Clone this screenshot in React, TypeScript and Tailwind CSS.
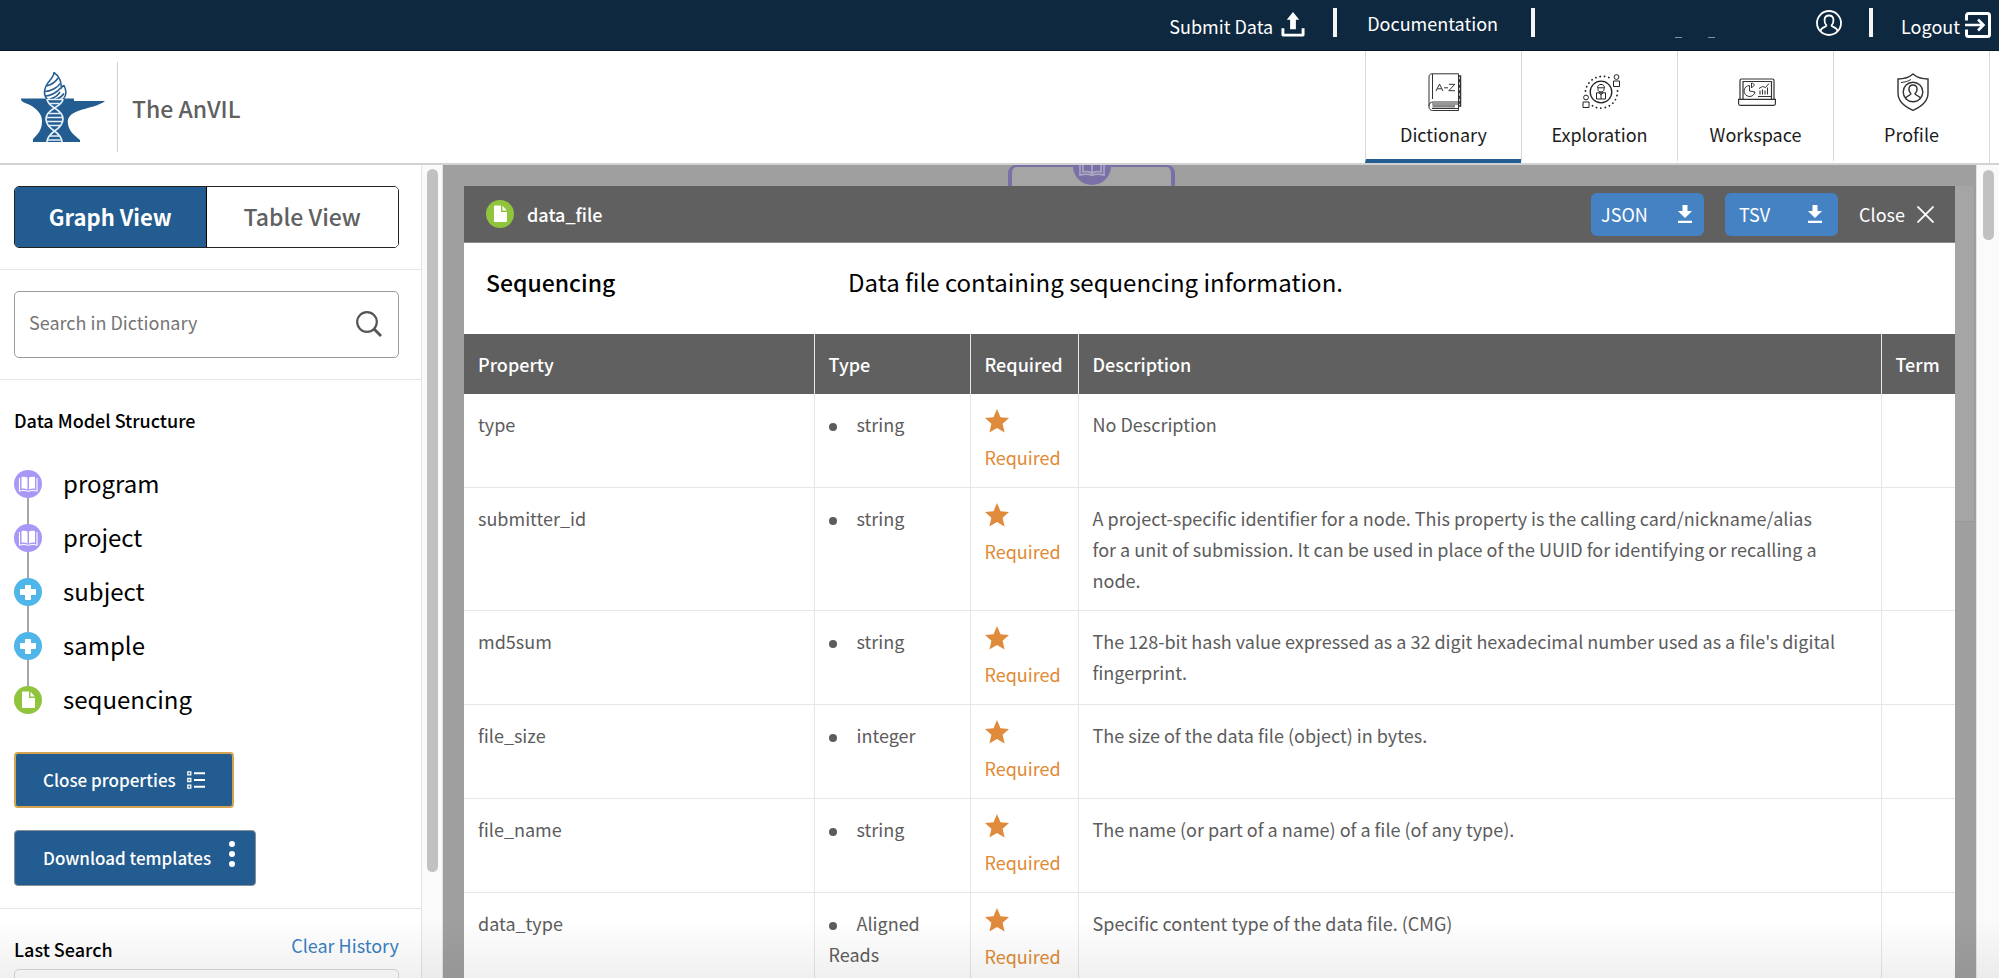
import React from "react";

type IconProps = { className?: string };

const FONT = "font-['Noto_Sans_CJK_SC','Noto_Sans',sans-serif]";

function AnvilLogo() {
  return (
    <svg viewBox="0 0 84 70" className="h-[70px] w-[84px]" role="img" aria-label="AnVIL logo">
      <path d="M0 26.500h53v2.500h31C80 33 66 36 57 39c-8 3-11 7-10 13 1 7 5 10 12 16v2H12v-3c5-5 9-9 9-18 0-7-5-12-12-16-4-2-9-3-9-6z" fill="#235c90" />
      <path d="M33 .5c0 7-10 10-9.500 20 0 3 1 5 3 7h15.500c3-3 4-8 1-14-2 .5-2.500 2-3 3 1-6-2-13-7-16z" fill="#fff" stroke="#235c90" strokeWidth="1.500" strokeLinejoin="round" />
      <g fill="none" stroke="#235c90" strokeWidth="1.500">
        <path d="M25.500 14c4-1 9-4 11.500-8M24 19.500c5 0 13-4 15-8M24.500 24c5 0 12-4 15-8M29 27c5-1 8-4 10-7M35 27.500c3-1 6-3 8-6" />
      </g>
      <g fill="none" stroke="#e4f0fa" strokeWidth="1.700">
        <path d="M26 27c0 3 3 6 7.500 9 5 3 8.500 6 8.500 11s-4 9-8.500 12c-4 3-7.500 6-7.500 11" />
        <path d="M42 27c0 3-3.500 6-8.500 9-5 3-8.500 6-8.500 11s4 9 8.500 12c4 3 7.500 6 7.500 11" />
        <path d="M26.500 27.500h15M28.500 31.500h10M28 41.500h11M25.500 45.500h16M25.500 49.500h16M28 53.500h11M29 64h9M26.500 68h14" strokeWidth="1.400" />
      </g>
    </svg>
  );
}

function UploadIcon({ className }: IconProps) {
  return (
    <svg viewBox="0 0 24 26" className={className} aria-hidden="true">
      <path d="M12 0l6.500 8H15v10H9V8H5.500z" fill="#fff" />
      <path d="M1.500 17v7h21v-7" fill="none" stroke="#fff" strokeWidth="3" strokeLinejoin="round" />
    </svg>
  );
}

function LogoutIcon({ className }: IconProps) {
  return (
    <svg viewBox="0 0 26 26" className={className} fill="none" stroke="#fff" strokeWidth="3" aria-hidden="true">
      <path d="M1.500 8.500V3.500a2 2 0 0 1 2-2h19a2 2 0 0 1 2 2v19a2 2 0 0 1-2 2h-19a2 2 0 0 1-2-2v-5" />
      <path d="M0 13h18M13 7.500l5.500 5.500-5.500 5.500" strokeWidth="2.600" />
    </svg>
  );
}

function UserCircleIcon({ className }: IconProps) {
  return (
    <svg viewBox="0 0 26 26" className={className} fill="none" stroke="#fff" strokeWidth="1.800" aria-hidden="true">
      <circle cx="13" cy="13" r="12" />
      <path d="M10.500 15.500C8 13 7 5.500 13 5.500s5 7.500 2.500 10c-.5 1.500 5.500 1.500 6 5.500M10.500 15.500c.5 1.500-5.500 1.500-6 5.500" />
    </svg>
  );
}

function DictionaryIcon() {
  return (
    <svg viewBox="0 0 34 38" className="h-[38px] w-[34px]" fill="none" stroke="#333" strokeWidth="1" aria-hidden="true">
      <path d="M30.500 .8H4C2 .8 1 2 1 4v30c0 2 1.500 3.500 3.500 3.500h26V.8z" />
      <path d="M4.500 1v25M1 33c0-2.500 1.500-4 4-4h25.500" />
      <path d="M4 31h26.500M4 35.500h26.500" />
      <path d="M4.500 33.300h22.500" stroke="#888" strokeWidth="2.600" />
      <path d="M31 3h1.500v4H31M31 8.500h1.500v4H31M31 14h1.500v4H31M31 19.500h1.500v4H31M31 25h1.500v4H31M31 30h1.500v3H31" strokeWidth="1.500" />
      <path d="M8 18l3.500-7 3.500 7M9.300 15.800h4.500M16 14.800h4M20.800 11.300h6l-6 6.400h6.200" />
    </svg>
  );
}

function ExplorationIcon() {
  return (
    <svg viewBox="0 0 38 36" className="h-[36px] w-[38px]" fill="none" stroke="#222" strokeWidth="1" aria-hidden="true">
      <path d="M3.500 17C5 6 17-1 28 4M35.500 17c0 10-7 16.500-15.500 17-4 .2-7-.5-10-2.500" strokeWidth="1.800" strokeLinecap="round" strokeDasharray="0.100 4.300" />
      <circle cx="19" cy="18" r="10.800" strokeWidth="1.300" />
      <path d="M16 14.200v1.500c0 3 6 3 6 0v-1.500M15.500 13.800c0-4.500 7-4.500 7 0z" />
      <path d="M14.500 25v-6.200h9V25zM19 18.800V25M17 18.800l2 2 2-2" />
      <circle cx="34.500" cy="3" r="2.400" /><path d="M31.500 12.500V7h6v5.500z" />
      <circle cx="4" cy="23.500" r="2.400" /><path d="M1 33.500V28h6v5.500z" />
    </svg>
  );
}

function WorkspaceIcon() {
  return (
    <svg viewBox="0 0 38 28" className="h-[28px] w-[38px]" fill="none" stroke="#333" strokeWidth="1.200" aria-hidden="true">
      <path d="M2 21V2.500C2 1.500 2.500 1 3.500 1h31c1 0 1.500.5 1.500 1.500V21" />
      <path d="M5 21V3.500h28.500V21" />
      <path d="M.6 21.300h36.800v4.500c0 1-.5 1.500-1.500 1.500H2.100c-1 0-1.500-.5-1.500-1.500z" />
      <path d="M11.500 7.500a5.500 5.500 0 1 0 5.500 6.500l-5.500-1zM13.500 10V5c1.500.3 2.500 1 3 2z" strokeWidth="1" />
      <path d="M22 16.500v-4M24.500 16.500v-5M27 16.500v-4M29.500 16.500v-7" strokeWidth="1.100" />
      <path d="M20 18.500h13M21 10.500l3.500-2 3 1L31 5.500" strokeWidth="1" />
    </svg>
  );
}

function ProfileIcon() {
  return (
    <svg viewBox="0 0 32 38" className="h-[38px] w-[32px]" fill="none" stroke="#333" strokeWidth="1.400" aria-hidden="true">
      <path d="M16 1c-4 3.500-9 5-15 5v14c0 8 6 13.500 15 17.300C25 33.500 31 28 31 20V6c-6 0-11-1.500-15-5z" />
      <path d="M4 9.500c4-.3 7-1.200 10-3" strokeWidth="1" />
      <circle cx="16" cy="19" r="9.800" />
      <path d="M14 20.500c-3-2.500-3-8.500 2-8.500s5 6 2 8.500c-.3 2 4.500 1.500 5.500 5M14 20.500c.3 2-4.500 1.500-5.500 5" />
    </svg>
  );
}

type Kind = "book" | "plus" | "file";

function NodeIcon({ kind, className }: { kind: Kind; className?: string }) {
  const fill = kind === "book" ? "#a897f5" : kind === "plus" ? "#50b5e8" : "#90c43c";
  return (
    <svg viewBox="0 0 28 28" className={className} aria-hidden="true">
      <circle cx="14" cy="14" r="14" fill={fill} />
      {kind === "book" && (
        <>
          <path d="M7.500 7c2.500-.6 4.500-.4 6 .5V19.500c-1.700-1-4-1.200-6-.8zM21 7c-2.500-.6-4.500-.4-6 .5V19.500c1.700-1 4-1.200 6-.8z" fill="#fff" />
          <path d="M5.500 8v13c3.500-.8 6-.6 8.800.3 2.700-.9 5.200-1.100 8.700-.3V8" fill="none" stroke="#fff" strokeWidth="1.100" />
        </>
      )}
      {kind === "plus" && <path d="M11.500 7.500h5v4h5v5h-5v5h-5v-5h-5v-5h5z" fill="#fff" stroke="#fff" strokeLinejoin="round" />}
      {kind === "file" && <path d="M9 5.500h6v6.500h6v9c0 .6-.4 1-1 1H9c-.6 0-1-.4-1-1V6.500c0-.6.4-1 1-1zM16.500 5.800l4.300 4.700h-4.300z" fill="#fff" />}
    </svg>
  );
}

function DownloadIcon() {
  return (
    <svg viewBox="0 0 14 18" className="h-[18px] w-[14px]" fill="#fff" aria-hidden="true">
      <path d="M4.500 0h5v6H14l-7 7-7-7h4.500zM0 15.700h14V18H0z" />
    </svg>
  );
}

const tabs = [
  { label: "Dictionary", icon: <DictionaryIcon />, active: true },
  { label: "Exploration", icon: <ExplorationIcon /> },
  { label: "Workspace", icon: <WorkspaceIcon /> },
  { label: "Profile", icon: <ProfileIcon /> },
];

const structure: { name: string; kind: Kind }[] = [
  { name: "program", kind: "book" },
  { name: "project", kind: "book" },
  { name: "subject", kind: "plus" },
  { name: "sample", kind: "plus" },
  { name: "sequencing", kind: "file" },
];

const rows = [
  { property: "type", type: "string", description: "No Description" },
  {
    property: "submitter_id",
    type: "string",
    description:
      "A project-specific identifier for a node. This property is the calling card/nickname/alias\nfor a unit of submission. It can be used in place of the UUID for identifying or recalling a node.",
  },
  {
    property: "md5sum",
    type: "string",
    description: "The 128-bit hash value expressed as a 32 digit hexadecimal number used as a file's digital fingerprint.",
  },
  { property: "file_size", type: "integer", description: "The size of the data file (object) in bytes." },
  { property: "file_name", type: "string", description: "The name (or part of a name) of a file (of any type)." },
  { property: "data_type", type: "Aligned Reads", description: "Specific content type of the data file. (CMG)" },
];

function TopBar() {
  const bar = <span className="h-[29px] w-1 bg-[#f4f4f4]" />;
  return (
    <div className="flex h-[51px] shrink-0 items-start justify-end border-b border-[#061a2b] bg-[#0d283f] pt-2 pr-2 text-lg leading-[29px] text-white">
      <a href="#submit" className="mr-7 flex items-center gap-2">
        <span className="pt-1">Submit Data</span>
        <UploadIcon className="h-[25px] w-6" />
      </a>
      {bar}
      <a href="#documentation" className="mr-[33px] ml-[30px] pt-px">Documentation</a>
      {bar}
      <a href="#account" aria-label="Account" className="ml-[140px] flex h-[30px] items-end gap-[26px]">
        <span className="h-px w-[7px] bg-[#8191a0]" />
        <span className="h-px w-[7px] bg-[#8191a0]" />
        <UserCircleIcon className="ml-[75px] h-[26px] w-[26px] self-center" />
      </a>
      <span className="w-[27px]" />
      {bar}
      <a href="#logout" className="ml-7 flex items-center gap-[5px]">
        <span className="pt-1">Logout</span>
        <LogoutIcon className="h-[26px] w-[26px]" />
      </a>
    </div>
  );
}

function Header() {
  return (
    <header className="flex h-[114px] shrink-0 justify-between border-b-2 border-[#d2d2d2] bg-white pr-[9px]">
      <div className="flex items-center pl-[21px]">
        <AnvilLogo />
        <span className="mr-[14px] ml-3 h-[90px] w-px bg-[#d0d0d0]" />
        <span className="pt-[2px] text-[23px] font-medium text-[#606060]">The AnVIL</span>
      </div>
      <nav className="flex border-r border-[#d8d8d8]">
        {tabs.map((t) => (
          <a
            key={t.label}
            href={"#" + t.label.toLowerCase()}
            className={
              "flex w-[156px] flex-col items-center border-b-4 border-l border-l-[#d8d8d8] pt-[21px] text-lg text-[#1c1c1c] " +
              (t.active ? "border-b-[#235c90]" : "border-b-transparent")
            }
          >
            <span className="flex h-[40px] items-center pl-[2px]">{t.icon}</span>
            <span className="pt-[7px] leading-[30px]">{t.label}</span>
          </a>
        ))}
      </nav>
    </header>
  );
}

function Sidebar() {
  return (
    <aside className="flex w-[443px] shrink-0 overflow-hidden">
      <div className="min-w-0 flex-1">
        <div className="border-b border-[#e6e6e6] px-[14px] pt-[21px] pb-[21px]">
          <div className="grid h-[62px] w-[385px] grid-cols-2 overflow-hidden rounded-[5px] border border-[#222] leading-[58px]">
            <button type="button" className="border-r border-black bg-[#235c90] pb-[2px] text-[22px] font-bold text-white">Graph View</button>
            <button type="button" className="bg-white pb-[2px] text-[23px] font-medium text-[#606060]">Table View</button>
          </div>
        </div>
        <div className="border-b border-[#e6e6e6] px-[14px] py-[21px]">
          <div className="flex h-[67px] w-[385px] items-center rounded-[5px] border border-[#9a9a9a] pr-4 pl-[14px]">
            <input type="text" aria-label="Search in Dictionary" placeholder="Search in Dictionary" className="h-[60px] min-w-0 flex-1 pb-[6px] text-lg text-[#606060] outline-none placeholder:text-[#757575]" />
            <button type="button" aria-label="Search" className="pb-[2px]">
              <svg viewBox="0 0 26 26" className="h-[26px] w-[26px]" fill="none" stroke="#555" strokeWidth="2.200" aria-hidden="true">
                <circle cx="11" cy="11" r="9.800" />
                <path d="M18 18l7 7" strokeWidth="2.800" />
              </svg>
            </button>
          </div>
        </div>
        <div className="border-b border-[#e6e6e6] px-[14px] pt-[26px] pb-[22px]">
          <h4 className="text-lg leading-[28px] font-medium text-black">Data Model Structure</h4>
          <ul className="mt-9">
            {structure.map((s, i) => (
              <li key={s.name} className="flex items-start text-2xl leading-[26px] text-black">
                <span className="flex w-7 flex-col items-center">
                  <NodeIcon kind={s.kind} className="h-7 w-7" />
                  {i < structure.length - 1 && <span className="h-[26px] w-[2px] bg-[#a6a6a6]" />}
                </span>
                <span className="pl-[21px]">{s.name}</span>
              </li>
            ))}
          </ul>
          <div className="mt-[38px] flex flex-col items-start gap-[22px] text-[17px] font-medium text-white">
            <button type="button" className="flex h-[56px] items-center gap-[11px] rounded-[4px] border-2 border-[#d3a552] bg-[#235c90] pr-[27px] pl-[27px]">
              Close properties
              <svg viewBox="0 0 18 18" className="h-[18px] w-[18px]" fill="none" stroke="#fff" strokeWidth="1.300" aria-hidden="true">
                <path d="M.8.800h3v3h-3zM.8 7.500h3v3h-3zM.8 14.200h3v3h-3z" />
                <path d="M7 2.300h11M7 9h11M7 15.700h11" strokeWidth="1.900" />
              </svg>
            </button>
            <button type="button" className="flex h-[56px] items-center gap-[18px] rounded-[4px] border border-[#8a8f96] bg-[#235c90] pr-[20px] pl-7">
              Download templates
              <svg viewBox="0 0 6 26" className="mb-2 h-[26px] w-[6px]" fill="#fff" aria-hidden="true">
                <circle cx="3" cy="3" r="3" /><circle cx="3" cy="13" r="3" /><circle cx="3" cy="23" r="3" />
              </svg>
            </button>
          </div>
        </div>
        <div className="px-[14px] pt-[22px]">
          <div className="flex w-[385px] justify-between text-lg leading-[28px]">
            <h4 className="pt-1 font-medium text-black">Last Search</h4>
            <button type="button" className="pb-1 text-[#3a7fc0]">Clear History</button>
          </div>
          <div className="mt-[6px] h-[60px] w-[385px] rounded-[5px] border border-[#d8d8d8]" />
        </div>
      </div>
      <div className="flex w-[22px] justify-center border-x border-[#e4e4e4] bg-[#fafafa] pt-[4px]">
        <div className="h-[703px] w-[11px] rounded-full bg-[#c1c1c1]" />
      </div>
    </aside>
  );
}

function PropertyPanel() {
  const dl = "flex h-[43px] w-[113px] items-center justify-between rounded-[6px] bg-[#4582c3]";
  const td = "border-b border-[#e6e6e6] px-[14px] pt-[15px] pb-[14px]";
  return (
    <section className="relative min-w-0 flex-1 bg-white">
      <div className="flex h-[57px] items-center border-b border-[#8c8c8c] bg-[#606060] pr-[21px] pl-[22px] text-lg text-white">
        <NodeIcon kind="file" className="h-7 w-7" />
        <span className="ml-[13px] flex-1 font-medium">data_file</span>
        <button type="button" className={dl + " mr-[21px] pr-3 pl-[10px]"}>JSON<DownloadIcon /></button>
        <button type="button" className={dl + " mr-[21px] pr-4 pl-[14px]"}>TSV<DownloadIcon /></button>
        <button type="button" className="flex items-center gap-3">
          Close
          <svg viewBox="0 0 17 17" className="h-[17px] w-[17px]" stroke="#fff" strokeWidth="1.800" aria-hidden="true">
            <path d="M.5.500l16 16M16.500.500l-16 16" />
          </svg>
        </button>
      </div>
      <div className="flex h-[91px] items-start px-[22px] pt-[23px] leading-8 text-black">
        <h3 className="w-[362px] text-[23px] font-medium">Sequencing</h3>
        <p className="text-2xl leading-8">Data file containing sequencing information.</p>
      </div>
      <table className="w-full table-fixed border-collapse text-left text-lg leading-[31px] text-[#5c5c5c]">
        <colgroup>
          <col className="w-[350px]" />
          <col className="w-[156px]" />
          <col className="w-[108px]" />
          <col />
          <col className="w-[74px]" />
        </colgroup>
        <thead>
          <tr className="h-[60px] bg-[#606060] text-white">
            {["Property", "Type", "Required", "Description", "Term"].map((h) => (
              <th key={h} scope="col" className="border-r border-[#e6e6e6] px-[14px] font-medium last:border-r-0">{h}</th>
            ))}
          </tr>
        </thead>
        <tbody>
          {rows.map((r) => (
            <tr key={r.property} className="align-top">
              <td className={td + " border-r"}>{r.property}</td>
              <td className={td + " border-r"}>
                <span className="mr-5 inline-block h-2 w-2 rounded-full bg-[#5c5c5c] align-middle" />
                {r.type}
              </td>
              <td className={td + " border-r text-[#e08a35]"}>
                <svg viewBox="0 0 24 24" className="mb-[9px] block h-6 w-6" fill="#e08a3c" aria-hidden="true">
                  <path d="M12 0l3.500 8.200 8.500.7-6.400 5.800 2 8.800L12 19l-7.600 4.500 2-8.800L0 8.900l8.500-.7z" />
                </svg>
                Required
              </td>
              <td className={td + " border-r whitespace-pre-line"}>{r.description}</td>
              <td className={td} />
            </tr>
          ))}
        </tbody>
      </table>
    </section>
  );
}

export default function App() {
  return (
    <div className={"relative flex h-screen flex-col overflow-hidden bg-white " + FONT}>
      <TopBar />
      <Header />
      <div className="flex min-h-0 flex-1">
        <Sidebar />
        <main className="relative flex min-w-0 flex-1 overflow-hidden bg-[#9f9f9f] pt-[21px] pr-[21px] pl-[21px]">
          <div className="absolute top-[21px] right-px h-[336px] w-[40px] border-r border-b border-[#999] bg-[#a5a5a5]" />
          <div className="absolute top-0 left-[565px] flex h-[80px] w-[167px] justify-center rounded-t-[8px] border-x-4 border-t-2 border-[#7a70a6] bg-[#a5a5a5]">
            <svg viewBox="0 0 38 38" className="-mt-5 h-[38px] w-[38px] shrink-0" fill="none" aria-hidden="true">
              <circle cx="19" cy="19" r="19" fill="#7a70a6" />
              <path d="M7 8v20c5-1 9-1 12 .5 3-1.500 7-1.500 12-.5V8M10 8v17c4-1 7-.5 9 1.500 2-2 5-2.500 9-1.500V8M19 8v18" stroke="#b0acc4" strokeWidth="1.500" />
            </svg>
          </div>
          <PropertyPanel />
        </main>
        <div className="flex w-[23px] shrink-0 justify-center border-l border-[#e4e4e4] bg-[#fafafa] pt-[5px]">
          <div className="h-[70px] w-[11px] rounded-full bg-[#c1c1c1]" />
        </div>
      </div>
      <div className="pointer-events-none absolute inset-x-0 bottom-0 h-[60px] bg-linear-to-b from-transparent to-black/6" />
    </div>
  );
}
